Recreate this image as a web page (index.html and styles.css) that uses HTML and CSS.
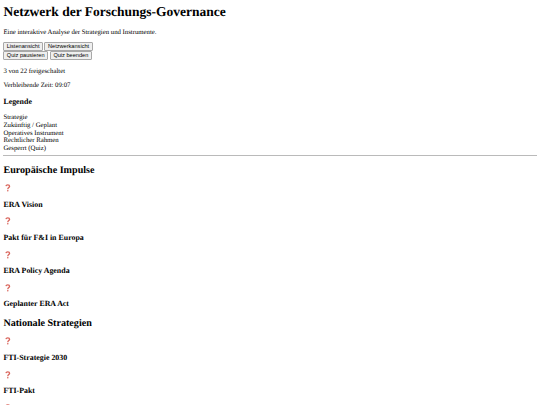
FILE: index.html
```html
<!DOCTYPE html>
<html lang="de">
<head>
<meta charset="utf-8">
<title>Netzwerk der Forschungs-Governance</title>
<link rel="stylesheet" href="styles.css">
</head>
<body>
<svg class="defs" aria-hidden="true"><symbol id="locked" viewBox="0 0 6 8"><path d="M.9 2.2C1.1 1.2 1.8.8 2.8.8C3.9.8 4.6 1.4 4.6 2.3C4.6 3.6 2.8 3.6 2.8 5.2" fill="none" stroke="#d9655c" stroke-width="1.3"/><circle cx="2.8" cy="6.8" r=".8" fill="#d9655c"/></symbol></svg>
<header>
<h1>Netzwerk der Forschungs-Governance</h1>
<p>Eine interaktive Analyse der Strategien und Instrumente.</p>
<div class="row"><button class="b1">Listenansicht</button><button class="b2">Netzwerkansicht</button></div>
<div class="row"><button class="b3">Quiz pausieren</button><button class="b4">Quiz beenden</button></div>
<p class="status">3 von 22 freigeschaltet</p>
<p>Verbleibende Zeit: 09:07</p>
</header>
<section class="legend">
<h3>Legende</h3>
<div>Strategie</div>
<div>Zukünftig / Geplant</div>
<div>Operatives Instrument</div>
<div>Rechtlicher Rahmen</div>
<div>Gesperrt (Quiz)</div>
</section>
<hr>
<main>
<h2>Europäische Impulse</h2>
<div class="mark"><svg><use href="#locked"/></svg></div>
<h3>ERA Vision</h3>
<div class="mark"><svg><use href="#locked"/></svg></div>
<h3>Pakt für F&amp;I in Europa</h3>
<div class="mark"><svg><use href="#locked"/></svg></div>
<h3>ERA Policy Agenda</h3>
<div class="mark"><svg><use href="#locked"/></svg></div>
<h3>Geplanter ERA Act</h3>
<h2>Nationale Strategien</h2>
<div class="mark"><svg><use href="#locked"/></svg></div>
<h3>FTI-Strategie 2030</h3>
<div class="mark"><svg><use href="#locked"/></svg></div>
<h3>FTI-Pakt</h3>
<div class="mark"><svg><use href="#locked"/></svg></div>
</main>
</body>
</html>
```
FILE: styles.css
```css
html { overflow: hidden; background: #fff; }
body {
  box-sizing: border-box;
  margin: 0;
  padding: 4px 3.4px 0;
  height: 405px;
  overflow: hidden;
  color: #000;
  font: 6.75px/7.6px "Liberation Serif", "Times New Roman", serif;
  text-rendering: geometricPrecision;
}
.defs { position: absolute; width: 0; height: 0; }
h1 { margin: 0 0 9px; font-size: 13.5px; line-height: 15.6px; }
p { margin: 6.75px 0; }
header h1 + p { margin-bottom: 6.1px; }
.row { display: flex; gap: 1.7px; height: 8.9px; }
button {
  box-sizing: border-box;
  height: 9px;
  padding: 0;
  border: 1px solid #a8a8a8;
  border-radius: 1px;
  background: #efefef;
  color: #000;
  font: 5.625px/7px "Liberation Sans", Arial, sans-serif;
  white-space: nowrap;
}
.b1 { width: 39.4px; }
.b2 { width: 48.2px; }
.b3 { width: 44.6px; }
.b4 { width: 42.4px; }
.status { margin-top: 7.5px; }
h3 { margin: 7.9px 0; font-size: 7.9px; line-height: 8.9px; }
.legend h3 { margin: 8.2px 0 7.8px; }
hr { margin: 2.8px 0 0; height: 1px; border: 0; background: #bababa; }
h2 { margin: 8.4px 0; font-size: 10.125px; line-height: 11.8px; }
.mark { display: flex; height: 8.42px; }
.mark svg { width: 6px; height: 8px; margin: -.4px 0 0 1.3px; }
```
